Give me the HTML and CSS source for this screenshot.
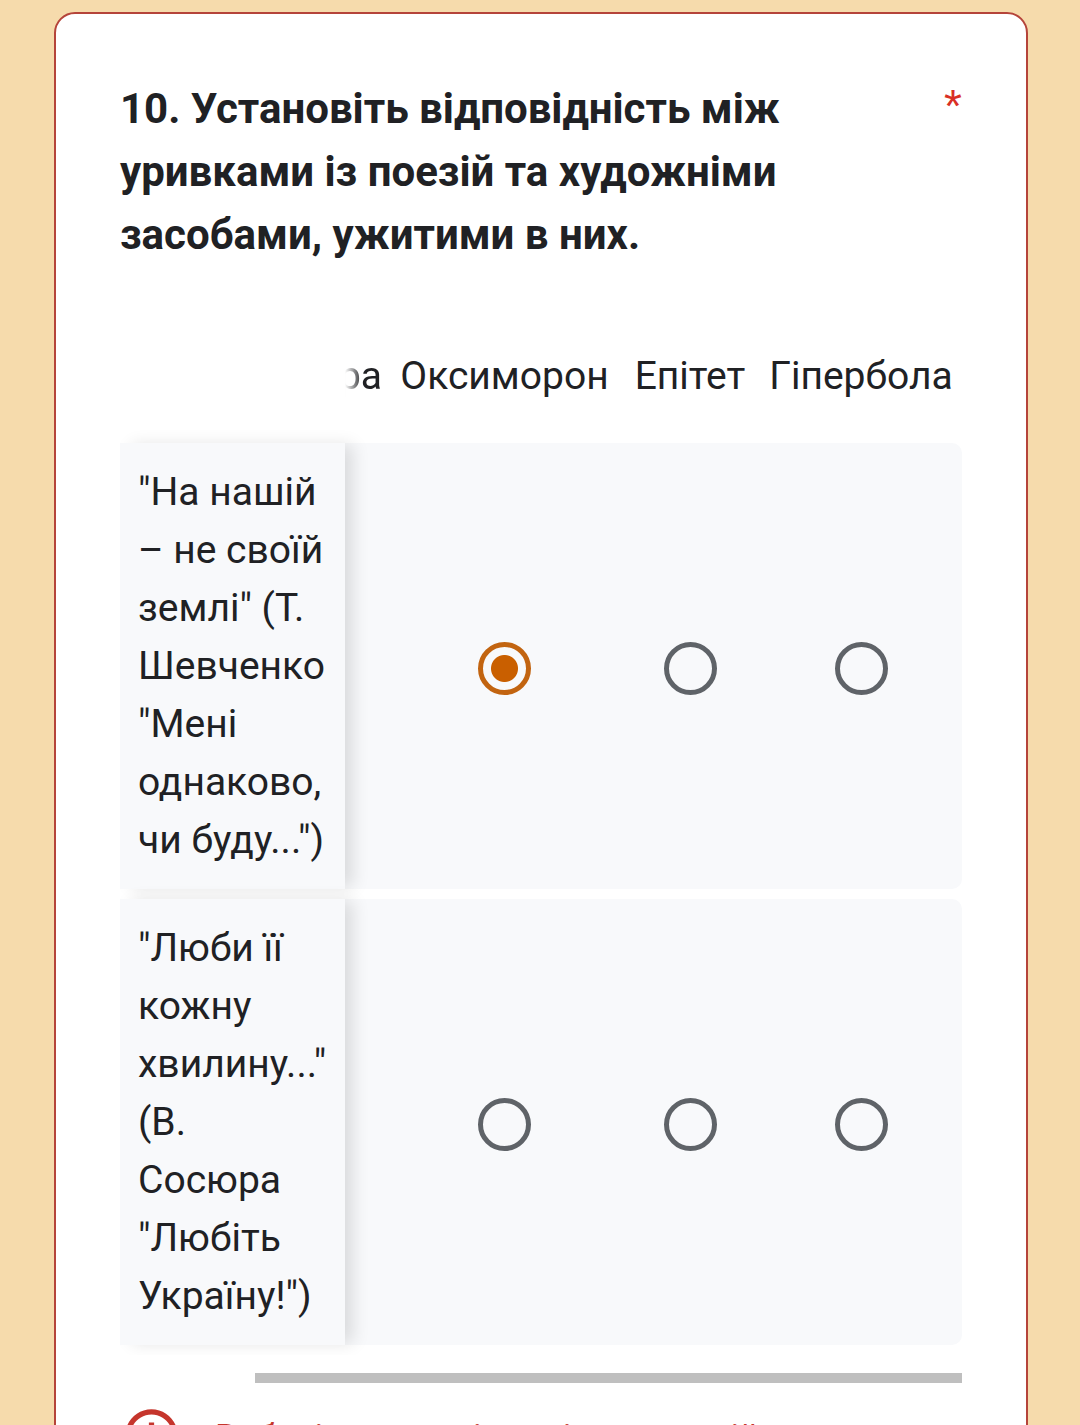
FILE: index.html
```html
<!DOCTYPE html>
<html lang="uk">
<head>
    <meta charset="UTF-8">
    <meta name="viewport" content="width=device-width, initial-scale=1.0">
    <title>Запитання 10</title>
    <link rel="stylesheet" href="styles.css">
</head>
<body>
    <form class="card">
        <div class="question">
            <h1 class="title" id="q10">10. Установіть відповідність між уривками із поезій та художніми засобами, ужитими в них.</h1>
            <span class="required">*</span>
        </div>

        <!-- scrolled to the right end, the first answer column is under the sticky one -->
        <div class="scroller">
            <table class="grid" aria-labelledby="q10">
                <thead>
                    <tr>
                        <td class="corner"></td>
                        <th class="cut" scope="col"><span>Метафора</span></th>
                        <th class="wide" scope="col">Оксиморон</th>
                        <th class="narrow" scope="col">Епітет</th>
                        <th class="last" scope="col">Гіпербола</th>
                    </tr>
                </thead>
                <tbody>
                    <tr>
                        <th class="row-label" scope="row">"На нашій – не своїй землі" (Т. Шевченко "Мені однаково, чи буду...")</th>
                        <td></td>
                        <td><input type="radio" name="row1" aria-label="Оксиморон" checked></td>
                        <td><input type="radio" name="row1" aria-label="Епітет"></td>
                        <td><input type="radio" name="row1" aria-label="Гіпербола"></td>
                    </tr>
                    <tr>
                        <th class="row-label" scope="row">"Люби її кожну хвилину..." (В. Сосюра "Любіть Україну!")</th>
                        <td></td>
                        <td><input type="radio" name="row2" aria-label="Оксиморон"></td>
                        <td><input type="radio" name="row2" aria-label="Епітет"></td>
                        <td><input type="radio" name="row2" aria-label="Гіпербола"></td>
                    </tr>
                </tbody>
            </table>
        </div>
        <div class="scrollbar"></div>

        <div class="error">
            <svg class="error-icon" viewBox="0 0 24 24" aria-hidden="true">
                <path fill="currentColor" d="M11 15h2v2h-2zm0-8h2v6h-2zm.99-5C6.47 2 2 6.48 2 12s4.47 10 9.99 10C17.52 22 22 17.52 22 12S17.52 2 11.99 2zM12 20c-4.42 0-8-3.58-8-8s3.58-8 8-8 8 3.58 8 8-3.58 8-8 8z"/>
            </svg>
            <span>Виберіть одну відповідь у кожній</span>
        </div>
    </form>
</body>
</html>
```

FILE: styles.css
```css
* {
    box-sizing: border-box;
}
html {
    height: 100%;
}
body {
    margin: 0;
    height: 100%;
    padding: 12px 52px 0 54px;
    overflow: hidden;
    background-color: #f6dbac;
    color: #202124;
    font-family: Roboto, sans-serif;
    font-size: 39px;
    line-height: 58px;
}
.card {
    padding: 63px 64px 60px;
    border: 2px solid #b5443a;
    border-radius: 21px;
    background-color: white;
}
.question {
    display: flex;
    justify-content: space-between;
    margin-bottom: 71px;
}
.title {
    margin: 0;
    max-width: 700px;
    font-size: 42px;
    line-height: 63px;
    font-weight: bold;
}
.required {
    color: #d93025;
    font-family: "Liberation Sans", Arial, sans-serif;
    font-size: 46px;
    line-height: 58px;
}
.scroller {
    overflow: hidden;
}
.grid {
    width: 100%;
    table-layout: fixed;
    border-collapse: separate;
    border-spacing: 0 10px;
}
.grid th {
    font-weight: normal;
}
.grid thead th {
    height: 86px;
    padding: 0 0 28px;
    text-align: center;
}
.corner {
    width: 225px;
}
.grid .cut {
    width: 44px;
}
/* text runs out to the left and fades at the sticky column */
.cut span {
    display: flex;
    justify-content: flex-end;
    padding-right: 7px;
    overflow: hidden;
    -webkit-mask-image: linear-gradient(to right, transparent, black 18px);
    mask-image: linear-gradient(to right, transparent, black 18px);
}
.wide {
    width: 231px;
}
.narrow {
    width: 140px;
}
.grid tbody td {
    padding: 0;
    background-color: #f8f9fb;
    text-align: center;
    vertical-align: middle;
}
.grid tbody td:last-child {
    border-radius: 0 10px 10px 0;
}
.grid .row-label {
    position: relative;
    padding: 20px 18px;
    background-color: #f8f9fb;
    box-shadow: 10px 0 16px -2px rgba(0, 0, 0, 0.12);
    text-align: left;
    vertical-align: middle;
}
input[type="radio"] {
    appearance: none;
    width: 53px;
    height: 53px;
    margin: 0;
    border: 5px solid #5f6368;
    border-radius: 50%;
    vertical-align: middle;
}
input[type="radio"]:checked {
    border-color: #c26410;
    background: radial-gradient(circle, #c95f00 13px, transparent 14px);
}
.scrollbar {
    height: 10px;
    margin: 18px 0 21px 135px;
    background-color: #bfbfbf;
}
.error {
    display: flex;
    align-items: flex-end;
    gap: 32px;
    color: #c5352c;
    font-size: 35px;
    white-space: nowrap;
}
.error-icon {
    width: 63px;
    height: 63px;
}
```
